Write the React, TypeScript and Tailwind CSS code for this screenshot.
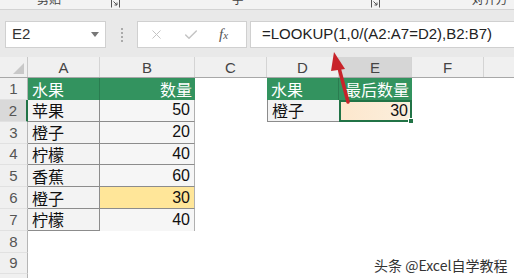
import { X, Check } from "lucide-react";

const cjk = { fontFamily: '"Noto Sans CJK SC", "Noto Sans", sans-serif' };

const COLS = [
  { key: "A", w: 72 },
  { key: "B", w: 95 },
  { key: "C", w: 72 },
  { key: "D", w: 72 },
  { key: "E", w: 73 },
  { key: "F", w: 72 },
];

const fruits = [
  ["苹果", "50"],
  ["橙子", "20"],
  ["柠檬", "40"],
  ["香蕉", "60"],
  ["橙子", "30"],
  ["柠檬", "40"],
];

// ribbon launcher glyph
const Launcher = () => (
  <svg width="9" height="8" viewBox="0 0 9 8" className="text-[#555]">
    <path d="M0.5 0 V7.5 M8.5 0 V7.5" stroke="currentColor" strokeWidth="1" />
    <path d="M2.5 1.5 L6 5 M6 2.5 V5 H3.5" stroke="currentColor" strokeWidth="1" fill="none" />
  </svg>
);

const RowHead = ({ n, active }: { n: number; active?: boolean }) => (
  <div
    className={`w-[28px] shrink-0 flex items-center justify-center text-[15px] leading-none text-[#555] border-r ${
      active ? "bg-[#d9d9d9] border-r-[#217346] border-r-2" : "bg-[#f0f0f0] border-r-[#b5b5b5]"
    } border-b border-b-[#e1e1e1]`}
    style={{ fontFamily: '"Liberation Sans", sans-serif' }}
  >
    {n}
  </div>
);

export default function App() {
  return (
    <div className="w-[514px] h-[278px] overflow-hidden bg-white relative" style={cjk}>
      {/* ribbon bottom edge */}
      <div className="h-[10px] bg-[#f3f3f3] flex text-[12px] text-[#444] overflow-hidden border-b border-[#d3d3d3]">
        <span className="ml-[37px] -mt-[9px] leading-[16px]">剪贴板</span>
        <span className="ml-[42px]"><Launcher /></span>
        <span className="ml-[112px] -mt-[9px] leading-[16px]">字体</span>
        <span className="ml-[118px]"><Launcher /></span>
        <span className="ml-[92px] -mt-[9px] leading-[16px]">对齐方式</span>
      </div>

      {/* formula bar */}
      <div className="h-[47px] bg-[#e9e9e9] flex items-start pt-[11px] pl-[5px]">
        <div className="w-[101px] h-[27px] bg-white border border-[#d0d0d0] flex items-center pl-[6px] pr-[6px] justify-between">
          <span className="text-[15px] text-[#333]" style={{ fontFamily: '"Liberation Sans", sans-serif' }}>E2</span>
          <svg width="8" height="5" viewBox="0 0 8 5"><path d="M0 0 H8 L4 5 Z" fill="#777" /></svg>
        </div>
        <div className="w-[31px] h-[27px] flex flex-col items-center justify-center gap-[2px]">
          <span className="w-[2px] h-[2px] bg-[#aaa]" />
          <span className="w-[2px] h-[2px] bg-[#aaa]" />
          <span className="w-[2px] h-[2px] bg-[#aaa]" />
          <span className="w-[2px] h-[2px] bg-[#aaa]" />
        </div>
        <div className="w-[110px] h-[27px] bg-white border border-[#d0d0d0] flex items-center">
          <X className="ml-[11px] w-[15px] h-[15px] text-[#c4c4c4]" strokeWidth={1.6} />
          <Check className="ml-[19px] w-[16px] h-[16px] text-[#c4c4c4]" strokeWidth={2.2} />
          <span className="ml-[20px] text-[15px] italic text-[#555]" style={{ fontFamily: '"Liberation Serif", serif' }}>
            f<span className="text-[11px]">x</span>
          </span>
        </div>
        <div className="ml-[3px] flex-1 h-[27px] bg-white border border-[#d0d0d0] border-r-0 flex items-center pl-[11px]">
          <span className="text-[15px] text-[#222]" style={{ fontFamily: '"Liberation Sans", sans-serif' }}>
            =LOOKUP(1,0/(A2:A7=D2),B2:B7)
          </span>
        </div>
      </div>

      {/* column headers */}
      <div className="flex h-[21px] bg-[#f0f0f0] border-b border-[#a8a8a8]">
        <div className="w-[28px] shrink-0 border-r border-[#c8c8c8] flex items-end justify-end pr-[3px] pb-[3px]">
          <svg width="11" height="11" viewBox="0 0 11 11"><path d="M11 0 V11 H0 Z" fill="#c8c8c8" /></svg>
        </div>
        {COLS.map((c) => (
          <div
            key={c.key}
            className={`shrink-0 flex items-center justify-center text-[15px] leading-none text-[#444] border-r border-[#d4d4d4] ${
              c.key === "E" ? "bg-[#d6d6d6]" : ""
            }`}
            style={{ width: c.w, fontFamily: '"Liberation Sans", sans-serif' }}
          >
            {c.key}
          </div>
        ))}
        <div className="flex-1" />
      </div>

      {/* row 1 */}
      <div className="flex h-[22px] leading-none">
        <RowHead n={1} />
        <div className="w-[72px] bg-[#33935f] text-white text-[16px] pl-[4px] flex items-center border-r border-[#2a7c50]">水果</div>
        <div className="w-[95px] bg-[#33935f] text-white text-[16px] pr-[3px] flex items-center justify-end">数量</div>
        <div className="w-[72px]" />
        <div className="w-[72px] bg-[#33935f] text-white text-[16px] pl-[4px] flex items-center border-r border-[#2a7c50]">水果</div>
        <div className="w-[73px] bg-[#33935f] text-white text-[16px] pr-[3px] flex items-center justify-end">最后数量</div>
      </div>

      {fruits.map(([name, qty], i) => (
        <div key={i} className="flex h-[21.8px] leading-none">
          <RowHead n={i + 2} active={i === 0} />
          <div className="w-[72px] bg-[#f3f3f3] border-r border-b border-[#8c8c8c] text-[16px] text-[#111] pl-[4px] flex items-center">
            {name}
          </div>
          <div
            className={`w-[95px] ${i === 4 ? "bg-[#ffe699]" : "bg-[#f6f6f6]"} ${
              i === 5 ? "" : "border-b border-[#8c8c8c]"
            } border-r border-r-[#b0b0b0] text-[16px] text-[#111] pr-[4px] flex items-center justify-end`}
            style={{ fontFamily: '"Liberation Sans", sans-serif' }}
          >
            {qty}
          </div>
          <div className="w-[72px]" />
          {i === 0 && (
            <>
              <div className="w-[72px] bg-[#f3f3f3] border-l border-b border-[#8c8c8c] text-[16px] text-[#111] pl-[4px] flex items-center">
                橙子
              </div>
              <div
                className="w-[73px] relative bg-gradient-to-r from-[#fde7cd] to-[#fbefdd] border-2 border-[#217346] text-[16px] text-[#111] pr-[2px] flex items-center justify-end"
                style={{ fontFamily: '"Liberation Sans", sans-serif' }}
              >
                30
                <span className="absolute -right-[4px] -bottom-[4px] w-[6px] h-[6px] bg-[#217346] border border-white" />
              </div>
            </>
          )}
        </div>
      ))}

      {[8, 9, 10].map((n) => (
        <div key={n} className="flex h-[21.8px]">
          <RowHead n={n} />
        </div>
      ))}

      {/* red arrow pointing at formula */}
      <svg className="absolute left-0 top-0 pointer-events-none" width="514" height="278">
        <line x1="348" y1="102" x2="338" y2="64" stroke="#c8232a" strokeWidth="3.5" strokeLinecap="round" />
        <path d="M334 52 L345 69 L331 71 Z" fill="#c8232a" />
      </svg>

      {/* watermark */}
      <div
        className="absolute left-[374px] top-[255px] text-[14px] text-[#333] whitespace-nowrap"
        style={{ textShadow: "0 0 2px #fff, 0 0 2px #fff" }}
      >
        头条 @Excel自学教程
      </div>
    </div>
  );
}
